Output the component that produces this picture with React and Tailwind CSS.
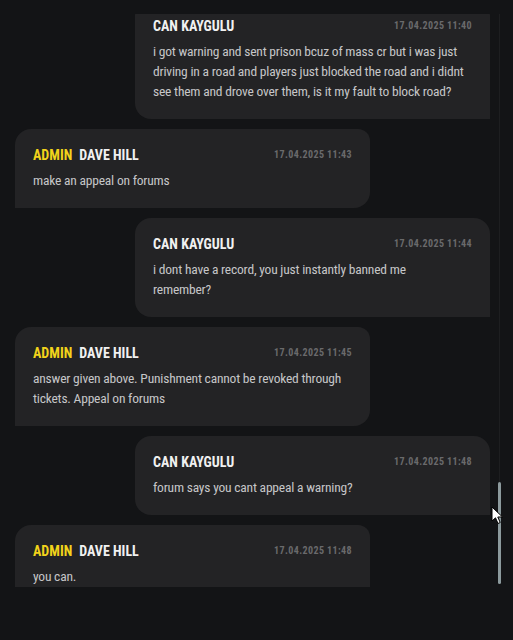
const messages = [
  {
    id: 1,
    admin: false,
    name: 'CAN KAYGULU',
    time: '17.04.2025 11:40',
    lines: [
      'i got warning and sent prison bcuz of mass cr but i was just',
      'driving in a road and players just blocked the road and i didnt',
      'see them and drove over them, is it my fault to block road?'
    ]
  },
  { id: 2, admin: true, name: 'DAVE HILL', time: '17.04.2025 11:43', lines: ['make an appeal on forums'] },
  {
    id: 3,
    admin: false,
    name: 'CAN KAYGULU',
    time: '17.04.2025 11:44',
    lines: ['i dont have a record, you just instantly banned me', 'remember?']
  },
  {
    id: 4,
    admin: true,
    name: 'DAVE HILL',
    time: '17.04.2025 11:45',
    lines: ['answer given above. Punishment cannot be revoked through', 'tickets. Appeal on forums']
  },
  { id: 5, admin: false, name: 'CAN KAYGULU', time: '17.04.2025 11:48', lines: ['forum says you cant appeal a warning?'] },
  { id: 6, admin: true, name: 'DAVE HILL', time: '17.04.2025 11:48', lines: ['you can.'] }
];

function Bubble ({ msg }) {
  const shape = msg.admin
    ? 'self-start rounded-2xl rounded-bl-none rounded-tr-xl'
    : 'self-end rounded-2xl rounded-br-none';
  return (
    <div className={`${shape} w-[355px] shrink-0 bg-[#232325] px-[18px] pt-[19px] pb-[18px]`}>
      <div className="flex h-[14px] items-center justify-between">
        <div className="flex items-center gap-[7px] text-[14px] font-bold leading-none">
          {msg.admin && <span className="text-[#f2d31b]">ADMIN</span>}
          <span className="text-[#f1f1f1]">{msg.name}</span>
        </div>
        <span className="text-[10px] font-bold leading-none tracking-[0.4px] text-[#6a6a6c]">{msg.time}</span>
      </div>
      <div className="mt-[8px] text-[13.5px] leading-[20px] tracking-[-0.2px] text-[#c6c6c8]">
        {msg.lines.map((line, i) => (
          <div key={i} className="whitespace-nowrap">{line}</div>
        ))}
      </div>
    </div>
  );
}

function Cursor () {
  return (
    <svg className="absolute left-[491px] top-[506px]" width="13" height="19" viewBox="0 0 13 19">
      <path d="M1 1 L1 15 L4.5 11.8 L7 17.5 L9.2 16.5 L6.8 11 L11.5 11 Z" fill="#ffffff" stroke="#000000" strokeWidth="1" strokeLinejoin="round" />
    </svg>
  );
}

export default function App () {
  return (
    <div className="relative h-[640px] w-[513px] overflow-hidden bg-[#131416] font-['Roboto_Condensed','Liberation_Sans',sans-serif]">
      <div className="flex h-[640px]">
        <div className="mt-[14px] h-[573px] w-[490px] overflow-hidden">
          <div className="-mt-[14px] flex flex-col gap-[10px] pl-[15px]">
            {messages.map((m) => (
              <Bubble key={m.id} msg={m} />
            ))}
          </div>
        </div>
        <div className="ml-[8px] mt-[14px] flex h-[570px] w-[3px] flex-col">
          <div className="w-[1px] flex-1 self-center bg-[#1d1e20]" />
          <div className="h-[102px] w-[3px] rounded-full bg-[#8c9a9d]" />
        </div>
      </div>
      <Cursor />
    </div>
  );
}
